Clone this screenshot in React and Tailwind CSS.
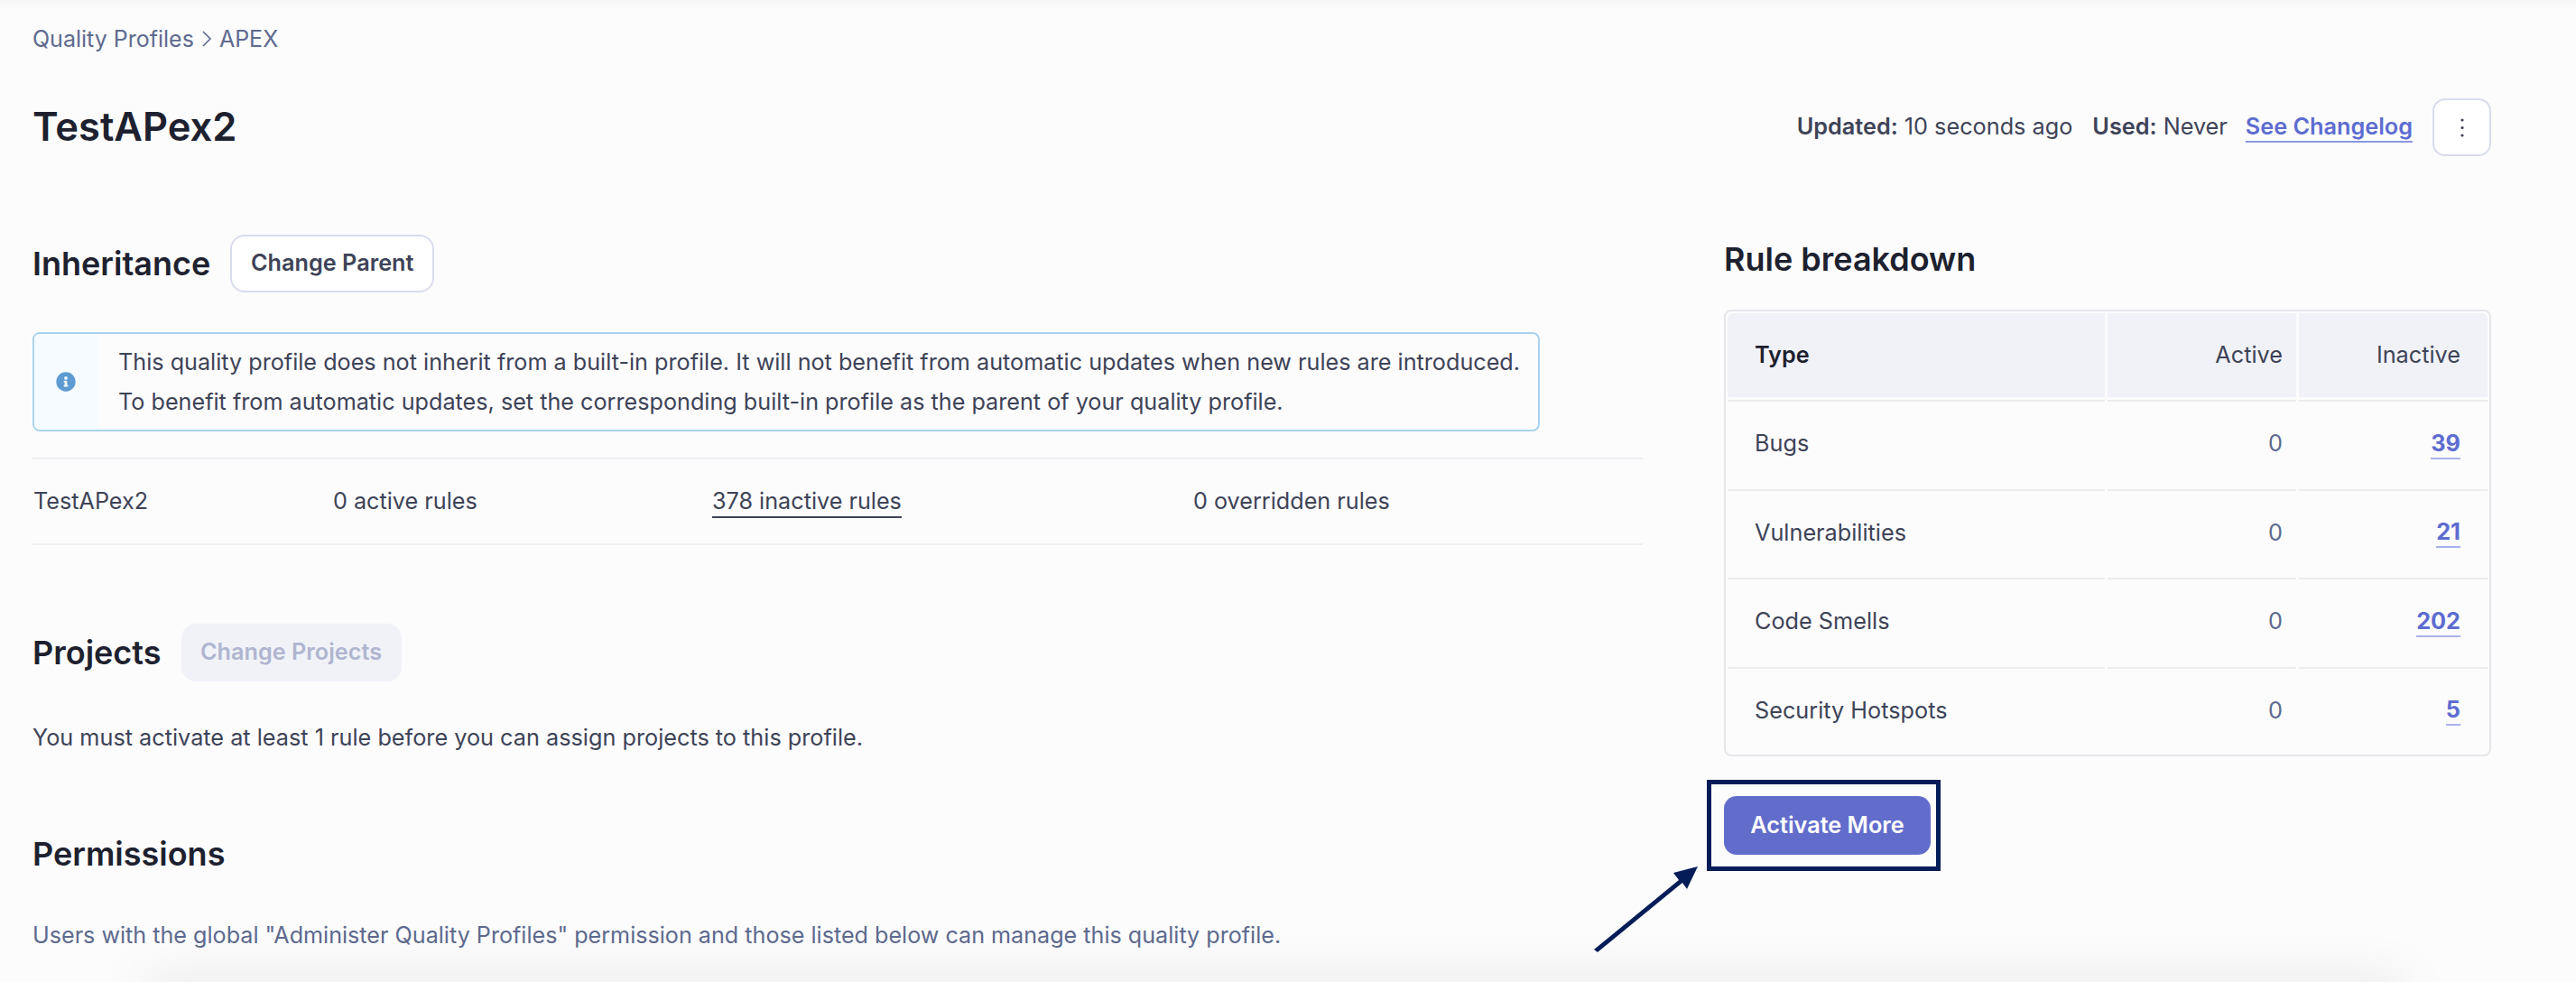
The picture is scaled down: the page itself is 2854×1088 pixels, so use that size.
import { FaInfoCircle } from "react-icons/fa";

const rows = [
  { type: "Bugs", inactive: "39" },
  { type: "Vulnerabilities", inactive: "21" },
  { type: "Code Smells", inactive: "202" },
  { type: "Security Hotspots", inactive: "5" },
];

function RuleTable() {
  return (
    <div className="mt-[29px] h-[495px] rounded-[8px] border-2 border-[#e6e6ea] px-px pt-[2px]">
      <div className="grid grid-cols-[418px_209px_209px] gap-x-[3px] px-px">
        <div className="flex h-[93px] items-center rounded-tl-[6px] bg-[#f1f2f8] pl-[30px] font-semibold text-[#1d212f]">Type</div>
        <div className="flex h-[93px] items-center justify-end bg-[#f1f2f8] pr-[15px] text-[#3e4357]">Active</div>
        <div className="flex h-[93px] items-center justify-end rounded-tr-[6px] bg-[#f1f2f8] pr-[30px] text-[#3e4357]">Inactive</div>
      </div>
      <div className="mt-[3px] grid grid-cols-[418px_209px_209px] gap-x-[3px] px-px">
        {rows.map((row) => (
          <div key={row.type} className="contents">
            <div className="flex h-[98.5px] items-center border-t-2 border-[#ececef] pb-[2px] pl-[30px] text-[#3e4357]">{row.type}</div>
            <div className="flex h-[98.5px] items-center justify-end border-t-2 border-[#ececef] pb-[2px] pr-[15px] text-[#5e6a8e]">0</div>
            <div className="flex h-[98.5px] items-center justify-end border-t-2 border-[#ececef] pb-[2px] pr-[30px]">
              <a className="border-b-2 border-[#a9b2ea] pb-px font-bold leading-[30px] text-[#5d6cd0]">{row.inactive}</a>
            </div>
          </div>
        ))}
      </div>
    </div>
  );
}

export default function App() {
  return (
    <div className="relative h-[1088px] w-[2854px] overflow-hidden bg-[#fcfcfd] px-[36px] font-['Inter',sans-serif] text-[25.25px] text-[#3e4357]">
      <div className="absolute inset-x-0 top-0 h-[10px] bg-gradient-to-b from-[#f6f6f7] to-transparent"></div>

      <div className="flex h-[36px] translate-y-[25px] items-center gap-[8px] text-[25px] leading-[36px] text-[#5e6a8e]">
        <span>Quality Profiles</span>
        <svg width="12" height="20" viewBox="0 0 12 20" fill="none" stroke="#5e6a8e" strokeWidth="1.6">
          <path d="M2 2l8 8-8 8" />
        </svg>
        <span>APEX</span>
      </div>

      <div className="mt-[73px] flex h-[64px] w-[2724px] items-center justify-between">
        <h1 className="text-[43.5px] font-semibold text-[#1d212f]">TestAPex2</h1>
        <div className="flex items-center">
          <span><b className="font-semibold">Updated:</b> 10 seconds ago</span>
          <span className="ml-[22px]"><b className="font-semibold">Used:</b> Never</span>
          <a className="ml-[20px] border-b-2 border-[#8b98e3] font-semibold leading-[32px] text-[#5d6cd0]">See Changelog</a>
          <button className="ml-[22px] flex h-[64px] w-[65px] items-center justify-center rounded-[14px] border-2 border-[#d9dcee] bg-white">
            <svg width="4" height="21" viewBox="0 0 4 21" fill="#3e4357">
              <circle cx="2" cy="2" r="1.6" />
              <circle cx="2" cy="10.5" r="1.6" />
              <circle cx="2" cy="19" r="1.6" />
            </svg>
          </button>
        </div>
      </div>

      <div className="mt-[87px] flex">
        <div className="w-[1784px]">
          <div className="flex h-[64px] items-center gap-[22px]">
            <h2 className="text-[36px] font-semibold text-[#1d212f]">Inheritance</h2>
            <button className="h-[64px] w-[226px] rounded-[16px] border-2 border-[#d9dcee] bg-white font-semibold text-[#3e4357]">Change Parent</button>
          </div>

          <div className="mt-[44px] flex h-[110px] w-[1670px] overflow-hidden rounded-[8px] border-2 border-[#a9d3ec] bg-[#fcfcfd]">
            <div className="flex w-[70px] items-center justify-center bg-[#f5fbff]">
              <FaInfoCircle className="text-[22px] text-[#5d9bd0]" />
            </div>
            <div className="flex flex-col justify-center whitespace-nowrap pl-[23px] text-[25.2px] leading-[44px]">
              <p>This quality profile does not inherit from a built-in profile. It will not benefit from automatic updates when new rules are introduced.</p>
              <p>To benefit from automatic updates, set the corresponding built-in profile as the parent of your quality profile.</p>
            </div>
          </div>

          <div className="mt-[29px] flex h-[97px] items-center border-y-2 border-[#efeff2] text-[25.2px]">
            <span className="w-[333px] pl-px">TestAPex2</span>
            <span className="w-[420px]">0 active rules</span>
            <span className="w-[533px]"><a className="border-b-2 border-[#3e4357] pb-[2px]">378 inactive rules</a></span>
            <span>0 overridden rules</span>
          </div>

          <div className="mt-[87px] flex h-[64px] items-center gap-[22px]">
            <h2 className="text-[36px] font-semibold text-[#1d212f]">Projects</h2>
            <button disabled className="h-[64px] w-[244px] rounded-[16px] bg-[#f1f2f8] font-semibold text-[#b0b5d0]">Change Projects</button>
          </div>
          <p className="mt-[40px] leading-[44px]">You must activate at least 1 rule before you can assign projects to this profile.</p>
          <h2 className="mt-[85px] text-[36px] font-semibold leading-[44px] text-[#1d212f]">Permissions</h2>
          <p className="mt-[46px] text-[25.15px] leading-[44px] text-[#5e6a8e]">Users with the global "Administer Quality Profiles" permission and those listed below can manage this quality profile.</p>
        </div>

        <div className="ml-[90px] w-[850px]">
          <h2 className="h-[54px] text-[36px] font-semibold leading-[54px] text-[#1d212f]">Rule breakdown</h2>
          <RuleTable />
          <div className="relative mt-[44px] w-fit">
            <button className="h-[65px] w-[229px] rounded-[14px] bg-[#626dcb] font-semibold text-white">Activate More</button>
            <div className="absolute -left-[19px] -top-[18px] h-[101px] w-[259px] border-[5px] border-[#041c58]"></div>
          </div>
        </div>
      </div>

      <svg className="absolute left-[1760px] top-[950px]" width="130" height="110" viewBox="0 0 130 110" fill="#041c58">
        <path d="M6 102 L100 25 L94 17 L121 10 L109 35 L104 28 L10 105 Z" />
      </svg>

      <div className="absolute bottom-[-30px] left-[160px] right-[190px] h-[30px] shadow-[0_0_60px_rgba(0,0,0,0.11)]"></div>
    </div>
  );
}
